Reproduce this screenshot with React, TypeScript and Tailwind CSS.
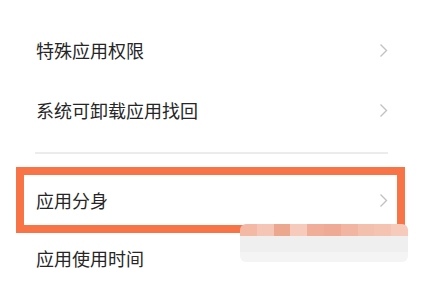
import React from "react";

const Chevron = () => (
  <svg width="9" height="15" viewBox="0 0 9 15" fill="none">
    <polyline points="1.5,1.5 7.5,7.5 1.5,13.5" stroke="#c2c2c2" strokeWidth="1.4" strokeLinejoin="miter" />
  </svg>
);

const Row = ({ label, h, chevron = true }: { label: string; h: string; chevron?: boolean }) => (
  <div className={`flex items-center justify-between pl-[36px] pr-[33px] ${h}`}>
    <span className="text-[18px] leading-none text-[#262626]">{label}</span>
    {chevron && <Chevron />}
  </div>
);

const pinks = ["#f3b9a4", "#f5c6b5", "#eca78f", "#f7cbbb", "#f0ae98", "#eeaa94", "#f1b5a1", "#f3c0ae", "#f4c3b2", "#f6cbbb"];

export default function App() {
  return (
    <div
      className="relative w-[421px] h-[282px] overflow-hidden bg-white"
      style={{ fontFamily: '"Noto Sans CJK SC", "Noto Sans", sans-serif' }}
    >
      <div className="flex flex-col pt-[20px]">
        <Row label="特殊应用权限" h="h-[60px]" />
        <Row label="系统可卸载应用找回" h="h-[60px]" />
        <div className="h-[27px] flex items-start pt-[12px] pl-[35px] pr-[33px]">
          <div className="h-[2px] w-full bg-[#ececec]" />
        </div>
        <div className="mx-[16px] w-[389px] h-[66px] border-[8px] border-[#f87447] flex items-center justify-between pl-[12px] pr-[9px]">
          <span className="text-[18px] leading-none text-[#262626]">应用分身</span>
          <Chevron />
        </div>
        <Row label="应用使用时间" h="h-[50px]" chevron={false} />
      </div>

      {/* blurred watermark overlay */}
      <div className="absolute left-[240px] top-[224px] w-[168px] h-[38px] rounded-[6px] overflow-hidden flex flex-col blur-[0.5px]">
        <div className="flex h-[12px]">
          {pinks.map((c, i) => (
            <div key={i} className="flex-1 h-full" style={{ background: c }} />
          ))}
        </div>
        <div className="flex-1 bg-[#efefef]" />
        <div className="h-[10px] bg-[#f4f4f4]" />
      </div>
    </div>
  );
}
